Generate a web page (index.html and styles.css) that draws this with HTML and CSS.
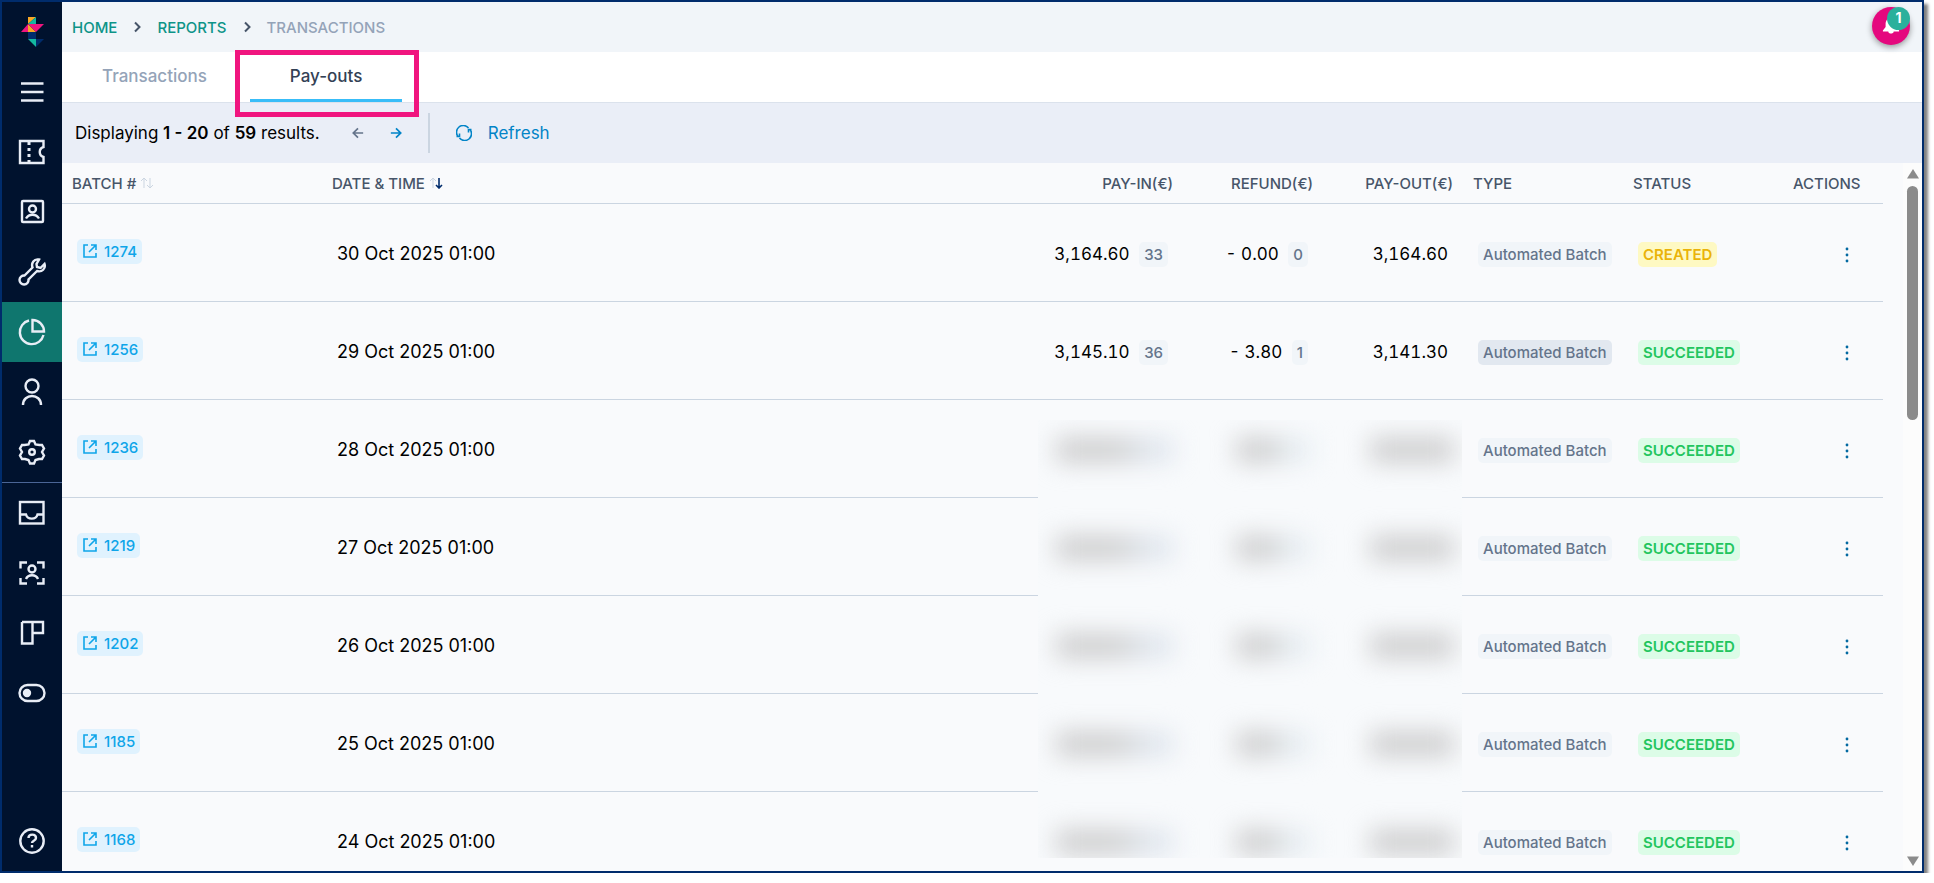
FILE: index.html
```html
<!DOCTYPE html>
<html lang="en">
<head>
    <meta charset="UTF-8">
    <meta name="viewport" content="width=device-width, initial-scale=1.0">
    <title>Pay-outs</title>
    <link rel="stylesheet" href="styles.css">
</head>
<body>
    <!-- Shared icons -->
    <svg class="icon-defs" aria-hidden="true">
        <symbol id="icon-open" viewBox="0 0 16 16">
            <path d="M6 2H2v12h12v-4M9 2h5v5M14 2L7 9"/>
        </symbol>
        <symbol id="icon-dots" viewBox="0 0 6 18">
            <circle cx="3" cy="3" r="1.4"/>
            <circle cx="3" cy="9" r="1.4"/>
            <circle cx="3" cy="15" r="1.4"/>
        </symbol>
        <symbol id="icon-chevron" viewBox="0 0 8 12">
            <path d="M2 1.500l4.500 4.500L2 10.500"/>
        </symbol>
    </svg>

    <div class="window">
        <nav class="sidebar" aria-label="Main">
            <a class="side-item" href="#" aria-label="Home">
                <svg class="side-icon" viewBox="0 0 30 30">
                    <path fill="#f9a825" d="M11 0h8l-8 7z"/>
                    <path fill="#14b8a0" d="M19 0v7h-8z"/>
                    <path fill="#f0157f" d="M11 7v8H4z"/>
                    <path fill="#f9a825" d="M11 7v8h8z"/>
                    <path fill="#f0157f" d="M11 7h16l-8 8z"/>
                    <path fill="#002c6c" d="M11 15h8v7h-8z"/>
                    <path fill="#14b8a0" d="M11 22h8v8z"/>
                    <path fill="#002c6c" d="M19 22h8l-8 8z"/>
                </svg>
            </a>
            <button class="side-item" type="button" aria-label="Menu">
                <svg class="side-icon" viewBox="0 0 30 30"><path d="M4 6.500h22.500M4 15h22.500M4 23.500h22.500"/></svg>
            </button>
            <a class="side-item" href="#" aria-label="Tickets">
                <svg class="side-icon" viewBox="0 0 30 30">
                    <path d="M3 4h23.500v6c-5 1.500-5 8.500 0 10v6H3z"/>
                    <path stroke-width="3" stroke-dasharray="3 3" d="M12 5v21"/>
                </svg>
            </a>
            <a class="side-item" href="#" aria-label="Contacts">
                <svg class="side-icon" viewBox="0 0 30 30">
                    <rect x="5" y="4" width="21" height="21" rx="1"/>
                    <circle cx="15.500" cy="12" r="3.500"/>
                    <path d="M9 21.500c3-5 10-5 13 0"/>
                </svg>
            </a>
            <a class="side-item" href="#" aria-label="Tools">
                <svg class="side-icon" viewBox="0 0 30 30">
                    <path d="M22 2.500c-5-1-8 3.500-6.500 8L7.500 18.500a4.500 4.500 0 1 0 4 4l8.500-8.500c5 1.500 9-2.500 7.500-7l-4 4-3.500-1-.5-3z"/>
                </svg>
            </a>
            <a class="side-item side-item-active" href="#" aria-label="Reports">
                <svg class="side-icon" viewBox="0 0 30 30">
                    <path d="M12 3.500a12 12 0 1 0 14.500 14.500"/>
                    <path d="M15.500 3v11.500H27A11.500 11.500 0 0 0 15.500 3z"/>
                </svg>
            </a>
            <a class="side-item" href="#" aria-label="Users">
                <svg class="side-icon" viewBox="0 0 30 30">
                    <circle cx="15" cy="9" r="6.500"/>
                    <path d="M6 28c0-12 18-12 18 0"/>
                </svg>
            </a>
            <a class="side-item" href="#" aria-label="Settings">
                <svg class="side-icon" viewBox="0 0 30 30">
                    <path d="M13 4h4l1.500 3.500 4 .5h2.500l2 3.500-2 3.500 2 3.500-2 3.500h-3l-3.500 1L17 26.500h-4L11.500 23 8 22H5l-2-3.500L5 15l-2-3.500L5 8h2.500l4-.5z"/>
                    <circle cx="15" cy="15" r="2.800"/>
                </svg>
            </a>
            <div class="side-divider"></div>
            <a class="side-item" href="#" aria-label="Inbox">
                <svg class="side-icon" viewBox="0 0 30 30">
                    <rect x="3" y="4" width="23.500" height="21.500"/>
                    <path d="M3 16.500h6c1.500 5.500 10 5.500 11.500 0h6"/>
                </svg>
            </a>
            <a class="side-item" href="#" aria-label="Scan">
                <svg class="side-icon" viewBox="0 0 30 30">
                    <path d="M10 4.500H3.500v6M20 4.500h6.500v6M3.500 20v5.500H10M26.500 20v5.500H20"/>
                    <circle cx="15" cy="11" r="3.500"/>
                    <path d="M9 21c2-5 10-5 12 0"/>
                </svg>
            </a>
            <a class="side-item" href="#" aria-label="Layout">
                <svg class="side-icon" viewBox="0 0 30 30"><path d="M5 4h21v11H15.500M15.500 4v21.500H5V4"/></svg>
            </a>
            <a class="side-item" href="#" aria-label="Features">
                <svg class="side-icon" viewBox="0 0 30 30">
                    <rect x="2.500" y="7" width="25" height="16" rx="8"/>
                    <circle cx="10" cy="15" r="3" fill="#e8edf6"/>
                </svg>
            </a>
            <a class="side-item side-item-last" href="#" aria-label="Help">
                <svg class="side-icon" viewBox="0 0 30 30">
                    <circle cx="15" cy="15" r="11.700"/>
                    <path d="M11.500 12c0-4.500 7.500-4.500 7.500 0 0 3-4 2.500-4 5"/>
                    <path d="M15 19v2.500"/>
                </svg>
            </a>
        </nav>

        <main class="main">
            <header class="topbar">
                <nav class="breadcrumb" aria-label="Breadcrumb">
                    <a href="#">HOME</a>
                    <svg class="chevron"><use href="#icon-chevron"/></svg>
                    <a href="#">REPORTS</a>
                    <svg class="chevron"><use href="#icon-chevron"/></svg>
                    <span>TRANSACTIONS</span>
                </nav>
                <button class="bell" type="button" aria-label="Notifications">
                    <svg class="bell-icon" viewBox="0 0 20 20"><path d="M10 1c4 0 6 3 6 7v3l3 4v1h-6c0 3-6 3-6 0H1v-1l3-4V8c0-4 2-7 6-7z"/></svg>
                    <span class="bell-count">1</span>
                </button>
            </header>

            <nav class="tabs" aria-label="Report type">
                <a class="tab" href="#">Transactions</a>
                <a class="tab tab-active" href="#">Pay-outs</a>
            </nav>

            <div class="toolbar">
                <p class="results">Displaying <b>1 - 20</b> of <b>59</b> results.</p>
                <button class="page-btn page-btn-off" type="button" aria-label="Previous page">
                    <svg viewBox="0 0 14 14"><path d="M13 7H1.500M7 1.500L1.500 7 7 12.500"/></svg>
                </button>
                <button class="page-btn" type="button" aria-label="Next page">
                    <svg viewBox="0 0 14 14"><path d="M1 7h11.500M7 1.500L12.500 7 7 12.500"/></svg>
                </button>
                <button class="refresh" type="button">
                    <svg viewBox="0 0 16 16">
                        <path d="M2 11.500A6.700 6.700 0 0 1 12.500 3M14 4.500A6.700 6.700 0 0 1 3.500 13M.5 11.500h3v-3M15.500 4.500h-3v3"/>
                    </svg>
                    Refresh
                </button>
            </div>

            <div class="content">
                <div class="table-area">
                    <table class="payouts">
                        <colgroup>
                            <col class="col-batch">
                            <col>
                            <col class="col-payin">
                            <col class="col-amount">
                            <col class="col-amount">
                            <col class="col-label">
                            <col class="col-label">
                            <col class="col-actions">
                        </colgroup>
                        <thead>
                            <tr>
                                <th>BATCH # <svg class="sort" viewBox="0 0 14 12"><path d="M4 11V1M1 4l3-3 3 3M10 1v10M7 8l3 3 3-3"/></svg></th>
                                <th>DATE &amp; TIME <svg class="sort" viewBox="0 0 14 12"><path d="M4 11V1M1 4l3-3 3 3"/><path class="sort-on" d="M10 1v10M7 8l3 3 3-3"/></svg></th>
                                <th class="num">PAY-IN(€)</th>
                                <th class="num">REFUND(€)</th>
                                <th class="num">PAY-OUT(€)</th>
                                <th>TYPE</th>
                                <th>STATUS</th>
                                <th>ACTIONS</th>
                            </tr>
                        </thead>
                        <tbody>
                            <tr>
                                <td><a class="tag tag-link" href="#"><svg><use href="#icon-open"/></svg>1274</a></td>
                                <td class="date">30 Oct 2025 01:00</td>
                                <td class="num">3,164.60 <span class="tag tag-count">33</span></td>
                                <td class="num">- 0.00 <span class="tag tag-count">0</span></td>
                                <td class="num">3,164.60</td>
                                <td><span class="tag">Automated Batch</span></td>
                                <td><span class="tag tag-created">CREATED</span></td>
                                <td class="actions"><button class="more" type="button" aria-label="Actions"><svg><use href="#icon-dots"/></svg></button></td>
                            </tr>
                            <tr>
                                <td><a class="tag tag-link" href="#"><svg><use href="#icon-open"/></svg>1256</a></td>
                                <td class="date">29 Oct 2025 01:00</td>
                                <td class="num">3,145.10 <span class="tag tag-count">36</span></td>
                                <td class="num">- 3.80 <span class="tag tag-count">1</span></td>
                                <td class="num">3,141.30</td>
                                <td><span class="tag tag-hover">Automated Batch</span></td>
                                <td><span class="tag tag-succeeded">SUCCEEDED</span></td>
                                <td class="actions"><button class="more" type="button" aria-label="Actions"><svg><use href="#icon-dots"/></svg></button></td>
                            </tr>
                            <tr>
                                <td><a class="tag tag-link" href="#"><svg><use href="#icon-open"/></svg>1236</a></td>
                                <td class="date">28 Oct 2025 01:00</td>
                                <td></td><td></td><td></td>
                                <td><span class="tag">Automated Batch</span></td>
                                <td><span class="tag tag-succeeded">SUCCEEDED</span></td>
                                <td class="actions"><button class="more" type="button" aria-label="Actions"><svg><use href="#icon-dots"/></svg></button></td>
                            </tr>
                            <tr>
                                <td><a class="tag tag-link" href="#"><svg><use href="#icon-open"/></svg>1219</a></td>
                                <td class="date">27 Oct 2025 01:00</td>
                                <td></td><td></td><td></td>
                                <td><span class="tag">Automated Batch</span></td>
                                <td><span class="tag tag-succeeded">SUCCEEDED</span></td>
                                <td class="actions"><button class="more" type="button" aria-label="Actions"><svg><use href="#icon-dots"/></svg></button></td>
                            </tr>
                            <tr>
                                <td><a class="tag tag-link" href="#"><svg><use href="#icon-open"/></svg>1202</a></td>
                                <td class="date">26 Oct 2025 01:00</td>
                                <td></td><td></td><td></td>
                                <td><span class="tag">Automated Batch</span></td>
                                <td><span class="tag tag-succeeded">SUCCEEDED</span></td>
                                <td class="actions"><button class="more" type="button" aria-label="Actions"><svg><use href="#icon-dots"/></svg></button></td>
                            </tr>
                            <tr>
                                <td><a class="tag tag-link" href="#"><svg><use href="#icon-open"/></svg>1185</a></td>
                                <td class="date">25 Oct 2025 01:00</td>
                                <td></td><td></td><td></td>
                                <td><span class="tag">Automated Batch</span></td>
                                <td><span class="tag tag-succeeded">SUCCEEDED</span></td>
                                <td class="actions"><button class="more" type="button" aria-label="Actions"><svg><use href="#icon-dots"/></svg></button></td>
                            </tr>
                            <tr>
                                <td><a class="tag tag-link" href="#"><svg><use href="#icon-open"/></svg>1168</a></td>
                                <td class="date">24 Oct 2025 01:00</td>
                                <td></td><td></td><td></td>
                                <td><span class="tag">Automated Batch</span></td>
                                <td><span class="tag tag-succeeded">SUCCEEDED</span></td>
                                <td class="actions"><button class="more" type="button" aria-label="Actions"><svg><use href="#icon-dots"/></svg></button></td>
                            </tr>
                        </tbody>
                    </table>

                    <!-- Hidden amounts, drawn over the table -->
                    <div class="masked">
                        <div class="masked-row"><i class="blob"></i><i class="blob blob-short"></i><i class="blob blob-end"></i></div>
                        <div class="masked-row"><i class="blob"></i><i class="blob blob-short"></i><i class="blob blob-end"></i></div>
                        <div class="masked-row"><i class="blob"></i><i class="blob blob-short"></i><i class="blob blob-end"></i></div>
                        <div class="masked-row"><i class="blob"></i><i class="blob blob-short"></i><i class="blob blob-end"></i></div>
                        <div class="masked-row"><i class="blob"></i><i class="blob blob-short"></i><i class="blob blob-end"></i></div>
                    </div>
                </div>

                <div class="scrollbar">
                    <svg viewBox="0 0 12 10"><path d="M6 0l6 9.500H0z"/></svg>
                    <div class="scroll-thumb"></div>
                    <svg class="scroll-down" viewBox="0 0 12 10"><path d="M6 10L0 .5h12z"/></svg>
                </div>
            </div>
        </main>

        <div class="highlight"></div>
    </div>
</body>
</html>
```
FILE: styles.css
```css
* {
    box-sizing: border-box;
}

body {
    margin: 0;
    background-color: #ffffff;
    color: #000000;
    font-family: Inter, "Liberation Sans", sans-serif;
    font-size: 18px;
    overflow: hidden;
}

a {
    text-decoration: none;
}

button {
    border: none;
    background: none;
    padding: 0;
    font: inherit;
    cursor: pointer;
}

svg {
    display: block;
    fill: none;
    stroke: currentColor;
}

.icon-defs {
    position: absolute;
    width: 0;
    height: 0;
}

.window {
    position: relative;
    display: flex;
    height: calc(100vh - 10px);
    margin-right: 10px;
    border: 2px solid #002c6c;
    box-shadow: 4px 4px 3px #808080;
}

/* Sidebar */
.sidebar {
    display: flex;
    flex-direction: column;
    flex: none;
    width: 60px;
    background-color: #00122e;
}

.side-item {
    display: flex;
    align-items: center;
    justify-content: center;
    height: 60px;
    color: #e8edf6;
}

.side-item-active {
    background-color: #0f766e;
}

.side-item-last {
    margin-top: auto;
}

.side-icon {
    width: 30px;
    height: 30px;
    stroke-width: 2.4;
}

.side-item:first-child .side-icon {
    stroke: none;
}

.side-divider {
    height: 1px;
    background-color: #4a6596;
}

.main {
    display: flex;
    flex-direction: column;
    flex: 1;
    min-width: 0;
    background-color: #f9fafc;
}

/* Top bar */
.topbar {
    display: flex;
    align-items: center;
    justify-content: space-between;
    height: 50px;
    padding: 0 12px 2px 10px;
    background-color: #f1f5f9;
}

.breadcrumb {
    display: flex;
    align-items: center;
    gap: 16px;
    padding-top: 2px;
    font-size: 15px;
    font-weight: 500;
    color: #94a3b8;
}

.breadcrumb a {
    color: #0d9488;
}

.chevron {
    width: 8px;
    height: 12px;
    color: #475569;
    stroke-width: 2;
}

.bell {
    position: relative;
    display: flex;
    align-items: center;
    justify-content: center;
    width: 38px;
    height: 38px;
    border-radius: 50%;
    background-color: #e5087e;
    box-shadow: 0 2px 6px rgba(0, 0, 0, 0.4);
}

.bell-icon {
    width: 18px;
    height: 18px;
    fill: #ffffff;
    stroke: none;
}

.bell-count {
    position: absolute;
    top: 0;
    right: 0;
    width: 23px;
    height: 23px;
    border-radius: 50%;
    background-color: #2ab09c;
    color: #ffffff;
    font-size: 14px;
    font-weight: 700;
    line-height: 22px;
}

/* Tabs */
.tabs {
    display: flex;
    gap: 3px;
    height: 51px;
    border-bottom: 1px solid #dbe2ec;
    background-color: #ffffff;
}

.tab {
    padding: 0 40px;
    border-bottom: 3px solid transparent;
    color: #94a3b8;
    font-size: 17px;
    font-weight: 500;
    line-height: 48px;
}

.tab-active {
    color: #334155;
    border-bottom-color: #38bdf8;
}

/* Toolbar */
.toolbar {
    display: flex;
    align-items: center;
    height: 60px;
    padding-left: 13px;
    background-color: #eaeef7;
}

.results {
    margin: 0 32px 0 0;
    font-size: 17px;
}

.results b {
    font-weight: 600;
}

.page-btn {
    margin-right: 26px;
    color: #0284c7;
}

.page-btn svg {
    width: 12px;
    height: 12px;
    stroke-width: 2;
}

.page-btn-off {
    color: #64748b;
}

.refresh {
    display: flex;
    align-items: center;
    gap: 16px;
    height: 40px;
    padding-left: 26px;
    border-left: 2px solid #cbd5e1;
    color: #0284c7;
    font-size: 17px;
}

.refresh svg {
    width: 16px;
    height: 16px;
    stroke-width: 1.6;
}

/* Table */
.content {
    display: flex;
    flex: 1;
    min-height: 0;
}

.table-area {
    position: relative;
    flex: 1;
    padding-right: 20px;
    overflow: hidden;
}

.payouts {
    width: 100%;
    table-layout: fixed;
    border-collapse: separate;
    border-spacing: 0;
}

.col-batch {
    width: 260px;
}

.col-payin {
    width: 160px;
}

.col-amount {
    width: 140px;
}

.col-label {
    width: 160px;
}

.col-actions {
    width: 100px;
}

th {
    height: 41px;
    padding: 0 10px;
    border-bottom: 1px solid #cbd5e1;
    color: #475569;
    font-size: 15px;
    font-weight: 500;
    text-align: left;
    white-space: nowrap;
}

td {
    height: 98px;
    padding: 3px 15px 0;
    border-bottom: 1px solid #cbd5e1;
    font-size: 17px;
    white-space: nowrap;
}

td.date {
    padding-top: 1px;
    font-size: 18px;
}

.num {
    text-align: right;
}

td.num {
    font-variant-numeric: tabular-nums;
}

.sort {
    display: inline-block;
    width: 14px;
    height: 12px;
    color: #cbd5e1;
}

.sort-on {
    stroke: #002c6c;
    stroke-width: 1.6;
}

.tag {
    display: inline-block;
    height: 25px;
    padding: 0 5px;
    border-radius: 5px;
    background-color: #f1f5f9;
    color: #64748b;
    font-size: 15px;
    font-weight: 500;
    font-variant-numeric: normal;
    line-height: 25px;
}

.tag-link {
    display: inline-flex;
    align-items: center;
    gap: 6px;
    margin-bottom: 6px;
    background-color: #e0f2fe;
    color: #0ea5e9;
    vertical-align: middle;
}

.tag-link svg {
    width: 16px;
    height: 16px;
    stroke-width: 1.6;
}

.tag-count {
    margin-left: 5px;
}

.tag-hover {
    background-color: #e2e8f0;
}

.tag-created {
    background-color: #fef9c3;
    color: #eab308;
    font-weight: 600;
}

.tag-succeeded {
    background-color: #dcfce7;
    color: #22c55e;
    font-weight: 600;
}

.actions {
    text-align: right;
}

.more {
    width: 42px;
    color: #0369a1;
    vertical-align: middle;
}

.more svg {
    width: 6px;
    height: 18px;
    margin: 0 auto;
    fill: currentColor;
    stroke: none;
}

.masked {
    position: absolute;
    top: 257px;
    right: 441px;
    bottom: 13px;
    width: 424px;
    overflow: hidden;
    background-color: #f8fafc;
}

.masked-row {
    display: flex;
    align-items: center;
    height: 98px;
    padding: 0 8px 38px 18px;
}

.blob {
    width: 118px;
    height: 26px;
    background: linear-gradient(90deg, #cfcfd0 50%, #e0e6ee 80%);
    filter: blur(12px);
}

.blob-short {
    width: 75px;
    margin-left: 62px;
    background: linear-gradient(90deg, #cfcfd0 40%, #e6edf2 75%);
}

.blob-end {
    width: 84px;
    margin-left: auto;
    background: #cfcfd0;
}

.scrollbar {
    display: flex;
    flex-direction: column;
    align-items: center;
    width: 19px;
    padding: 6px 0 5px;
    background-color: #fcfcfc;
}

.scrollbar svg {
    width: 12px;
    height: 10px;
    fill: #8b8b8b;
    stroke: none;
}

.scroll-thumb {
    width: 11px;
    height: 234px;
    margin-top: 7px;
    border-radius: 6px;
    background-color: #8b8b8b;
}

.scroll-down {
    margin-top: auto;
}

/* Frame around the active tab */
.highlight {
    position: absolute;
    top: 48px;
    left: 233px;
    width: 184px;
    height: 67px;
    border: 5px solid #f0157f;
}
```
